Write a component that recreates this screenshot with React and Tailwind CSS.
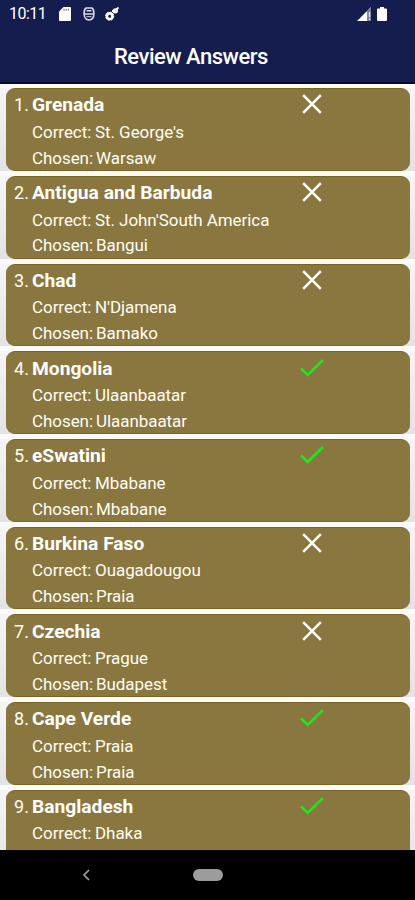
const answers = [
  { name: "Grenada", correct: "St. George's", chosen: "Warsaw", ok: false },
  { name: "Antigua and Barbuda", correct: "St. John'South America", chosen: "Bangui", ok: false },
  { name: "Chad", correct: "N'Djamena", chosen: "Bamako", ok: false },
  { name: "Mongolia", correct: "Ulaanbaatar", chosen: "Ulaanbaatar", ok: true },
  { name: "eSwatini", correct: "Mbabane", chosen: "Mbabane", ok: true },
  { name: "Burkina Faso", correct: "Ouagadougou", chosen: "Praia", ok: false },
  { name: "Czechia", correct: "Prague", chosen: "Budapest", ok: false },
  { name: "Cape Verde", correct: "Praia", chosen: "Praia", ok: true },
  { name: "Bangladesh", correct: "Dhaka", ok: true },
];

function StatusBar() {
  return (
    <div className="flex h-7 items-center pl-[9px] pr-[28px] text-white">
      <span className="w-[50px] text-[16px] leading-none tracking-[-0.5px]">10:11</span>
      <svg className="h-[14px] w-[12px]" viewBox="0 0 12 14" fill="#fff">
        <path d="M4.500 0H11a1 1 0 0 1 1 1v12a1 1 0 0 1-1 1H1a1 1 0 0 1-1-1V4.500z" />
        <path d="M5 1.800v2M7.200 1.800v2M9.400 1.800v2" stroke="#737691" strokeWidth="1.100" />
      </svg>
      <svg className="ml-[12px] h-[14px] w-[12px]" viewBox="0 0 12 14" fill="none" stroke="#d8dae6" strokeWidth="1.600">
        <path d="M3 1h6c1.200.8 1.900 3 1.900 5.500 0 4-2 6.500-4.900 6.500s-4.900-2.500-4.900-6.500C1.100 4 1.800 1.800 3 1z" />
        <path d="M3.500 3.800h5M1 7h10" />
        <path d="M3.500 9.700h5" strokeWidth="1" />
      </svg>
      <svg className="ml-[10px] h-[14px] w-[14px]" viewBox="0 0 14 14" fill="none" stroke="#fff">
        <circle cx="4.700" cy="9.200" r="2.800" strokeWidth="2.600" />
        <circle cx="4.700" cy="9.200" r="4.100" strokeWidth="1" strokeDasharray="1.700 1.520" />
        <circle cx="10.300" cy="3.800" r="1.500" strokeWidth="2.300" />
        <path d="M11.500 2.500l2-2M7 4h2" strokeWidth="1.900" />
      </svg>
      <svg className="ml-auto h-[14px] w-[14px]" viewBox="0 0 14 14">
        <path d="M0 14L14 0v3h-3.500v11z" fill="#fff" />
        <path d="M10.500 3.500L14 0v14h-3.500z" fill="#777a98" />
        <path d="M12.500 5v5M12.500 11.500v1.500" stroke="#dfe0ea" strokeWidth="1.400" />
      </svg>
      <svg className="ml-[6px] h-[14px] w-[10px] -mt-px" viewBox="0 0 10 15" preserveAspectRatio="none" fill="#fff">
        <path d="M3 0h4v1.500h2a1 1 0 0 1 1 1V14a1 1 0 0 1-1 1H1a1 1 0 0 1-1-1V2.500a1 1 0 0 1 1-1h2z" />
      </svg>
    </div>
  );
}

function Mark({ ok }) {
  return (
    <svg className="h-[22px] w-[26px]" viewBox="0 0 26 22" fill="none" strokeWidth="2.500">
      {ok ? (
        <path d="M2 11.500L8.700 18L24 3" stroke="#20e620" />
      ) : (
        <path d="M4.200 2.200L21.800 19.800M21.800 2.200L4.200 19.800" stroke="#fff" />
      )}
    </svg>
  );
}

function AnswerCard({ index, item }) {
  return (
    <div className="h-[87.7px] shrink-0 bg-linear-to-b from-[#f6f6f6] to-[#e2e2e4]">
      <div className="-mt-[2px] border-t-5 border-[#fbfaf9] pl-[6px] pr-[5px]">
        <div className="flex h-[82.6px] rounded-[9px] border-y border-[#79651f] bg-[#8a773f] pl-[8px] pt-[3.200px] text-[#fffdf4]">
          <span className="w-[18px] text-[18px] leading-[26px] whitespace-nowrap">{index}.</span>
          <div className="w-[262px] whitespace-nowrap text-[17px] leading-[26px]">
            <div className="text-[19.200px] font-bold text-white">{item.name}</div>
            <div className="flex gap-[4px] pt-[0.500px] tracking-[-0.06px]">
              <span className="w-[59px]">Correct:</span>
              <span>{item.correct}</span>
            </div>
            {item.chosen && (
              <div className="-mt-[0.200px] flex gap-[4px] tracking-[-0.06px]">
                <span className="w-[60px]">Chosen:</span>
                <span>{item.chosen}</span>
              </div>
            )}
          </div>
          <div className="ml-[5px] pt-[1px]">
            <Mark ok={item.ok} />
          </div>
        </div>
      </div>
    </div>
  );
}

export default function App() {
  return (
    <div className="flex h-[900px] w-[415px] flex-col overflow-hidden bg-black font-['Roboto',sans-serif]">
      <header className="h-[84px] shrink-0 border-b-2 border-[#070b2d] bg-[#151c4e]">
        <StatusBar />
        <h1 className="pl-[114px] pt-[13px] text-[22px] font-medium leading-[32px] tracking-[-0.5px] text-white">Review Answers</h1>
      </header>
      <main className="flex h-[766px] shrink-0 flex-col overflow-hidden bg-[#fbfaf9] pt-[1.300px]">
        {answers.map((item, i) => (
          <AnswerCard key={item.name} index={i + 1} item={item} />
        ))}
      </main>
      <nav className="flex h-[50px] items-center bg-black">
        <svg className="ml-[82px] h-[12px] w-[8px]" viewBox="0 0 8 12" fill="none" stroke="#a0a0a0" strokeWidth="1.700">
          <path d="M7 1L2 6l5 5" />
        </svg>
        <div className="ml-[103px] h-[12px] w-[30px] rounded-full bg-[#9c9c9c]" />
      </nav>
    </div>
  );
}
